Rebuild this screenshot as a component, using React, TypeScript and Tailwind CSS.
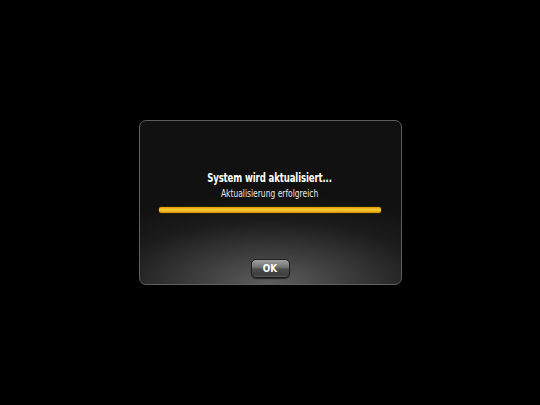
export default function App() {
  return (
    <div className="flex h-[405px] w-[540px] items-center justify-center bg-black">
      <div
        className="flex h-[165px] w-[263px] flex-col items-center rounded-[7px] border border-[#5e5e5e] bg-[radial-gradient(ellipse_85%_55%_at_50%_100%,#5e5e5e_0%,#3c3c3c_35%,#1c1c1c_70%,#111111_100%)]"
        style={{ fontFamily: '"DejaVu Sans", "Liberation Sans", sans-serif' }}
      >
        <p className="mt-[49px] whitespace-nowrap text-[13px] font-bold leading-[16px] tracking-[-0.2px] text-white [transform:scaleX(0.66)]">
          System wird aktualisiert...
        </p>
        <p className="mt-[1px] whitespace-nowrap text-[10.5px] leading-[12px] text-[#e8e8e8] [transform:scaleX(0.72)]">
          Aktualisierung erfolgreich
        </p>
        <div className="mt-[8px] h-[6px] w-[222px] rounded-[2px] bg-[linear-gradient(#d99c00,#f8c634_40%,#f2b820_70%,#c98b00)] shadow-[0_0_0_1px_#2a1e00]" />
        <div className="mt-[46px] flex h-[19px] w-[39px] items-center justify-center rounded-[5px] border border-[#202020] bg-[linear-gradient(#a0a0a0,#767676_40%,#4c4c4c_55%,#3e3e3e_85%,#555555)] shadow-[0_1px_1px_#222]">
          <span className="text-[11px] font-semibold leading-none text-white [transform:scaleX(0.8)]">OK</span>
        </div>
      </div>
    </div>
  );
}
